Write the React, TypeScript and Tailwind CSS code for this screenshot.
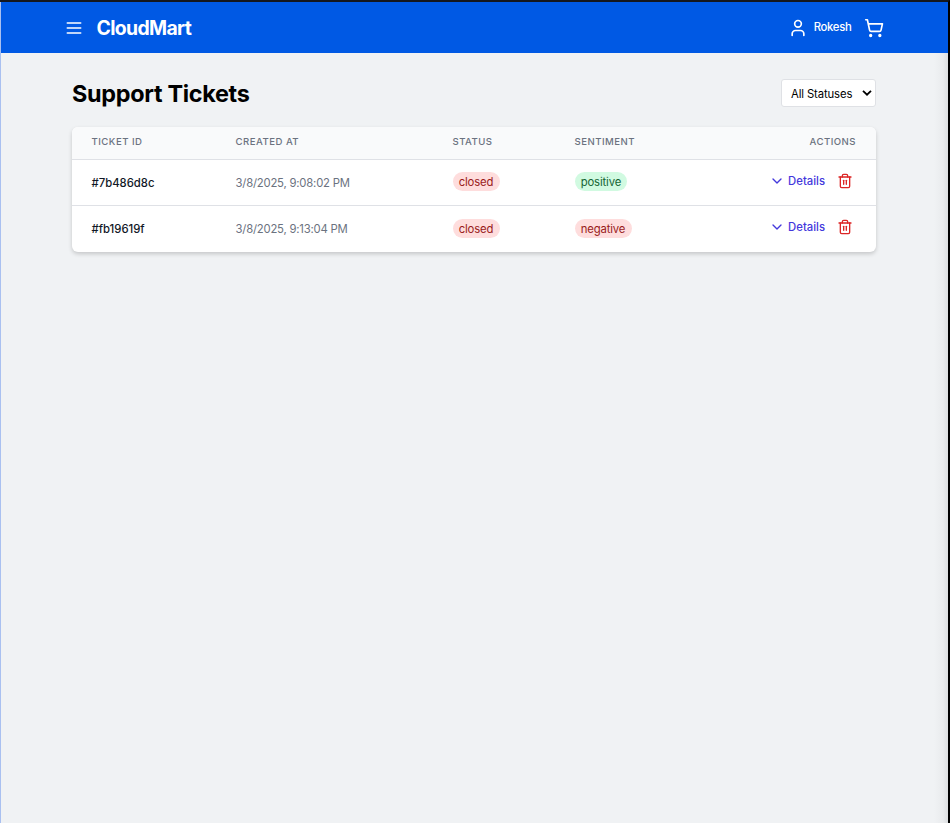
import { ChevronDown, ShoppingCart, Trash2, User } from "lucide-react";

type Ticket = {
  id: string;
  createdAt: string;
  status: string;
  sentiment: "positive" | "negative";
};

const tickets: Ticket[] = [
  { id: "#7b486d8c", createdAt: "3/8/2025, 9:08:02 PM", status: "closed", sentiment: "positive" },
  { id: "#fb19619f", createdAt: "3/8/2025, 9:13:04 PM", status: "closed", sentiment: "negative" },
];

const columns = "grid grid-cols-[144px_217px_122px_1fr_auto] pr-5 pl-[19.5px]";

function Badge({ label, tone }: { label: string; tone: "red" | "green" }) {
  const colors = tone === "red" ? "bg-[#fedddd] text-[#991b1b]" : "bg-[#d1fae1] text-[#166534]";
  return (
    <span className={`inline-flex h-[19px] items-center rounded-full px-[6.2px] pt-px text-[11.3px] tracking-[-0.13px] ${colors}`}>
      {label}
    </span>
  );
}

function MenuIcon() {
  return (
    <svg width="20" height="20" viewBox="0 0 24 24" fill="none" stroke="currentColor" strokeWidth="2" strokeLinecap="round">
      <path d="M4 6h16M4 12h16M4 18h16" />
    </svg>
  );
}

function Header() {
  return (
    <header className="flex h-[51px] items-center justify-between bg-[#0059e4] pr-[64.5px] pl-[62.5px] text-white">
      <div className="flex items-center">
        <button aria-label="Open menu">
          <MenuIcon />
        </button>
        <span className="ml-[13px] pt-px text-[19.4px] leading-6 font-bold tracking-[-0.65px]">CloudMart</span>
      </div>
      <div className="flex items-center">
        <User size={20} />
        <span className="ml-1.5 text-[11.3px] font-medium tracking-[-0.3px]">Rokesh</span>
        <ShoppingCart size={20} className="ml-3" />
      </div>
    </header>
  );
}

function TicketRow({ ticket }: { ticket: Ticket }) {
  return (
    <div className="group border-t border-[#dfe1e6] last:pb-px">
      <div className={`${columns} h-[45px] items-center text-[11.3px]`}>
        <span className="pt-[2px] font-medium text-[#111827]">{ticket.id}</span>
        <span className="pt-[2px] tracking-[-0.2px] text-[#6b7280]">{ticket.createdAt}</span>
        <span className="flex pb-[2px] group-last:pb-0">
          <Badge label={ticket.status} tone="red" />
        </span>
        <span className="flex pb-[2px] group-last:pb-0">
          <Badge label={ticket.sentiment} tone={ticket.sentiment === "positive" ? "green" : "red"} />
        </span>
        <div className="flex items-center pr-[3px] pb-[3px] font-medium">
          <button className="flex items-center text-[#4338dc]">
            <ChevronDown size={16} className="mr-[3px]" />
            <span className="pt-px">Details</span>
          </button>
          <button aria-label="Delete ticket" className="ml-3 text-[#dc2626]">
            <Trash2 size={16} />
          </button>
        </div>
      </div>
    </div>
  );
}

export default function App() {
  return (
    <div className="flex h-[823px] w-[950px] flex-col overflow-hidden border-t-2 border-r-2 border-t-[#14171d] border-r-black bg-[#f0f2f4] font-['Inter',sans-serif]">
      <div className="flex min-h-0 flex-1 border-l border-[#a9c0f0] bg-[linear-gradient(to_left,#dcdee0,#e9ebed_5px,#f0f2f4_14px)]">
        <div className="min-w-0 flex-1">
          <Header />
          <main className="pr-[72px] pl-[71px]">
            <div className="flex h-[54px] items-end justify-between">
              <h1 className="text-[23.4px] leading-[26px] font-bold tracking-[-0.3px] text-black">Support Tickets</h1>
              <button className="flex h-[28px] w-[95px] items-center justify-between rounded-[3px] border border-[#dfe1e5] bg-white pr-[3px] pl-[9px] text-[11.3px] tracking-[-0.12px] text-black">
                <span className="pt-[3px]">All Statuses</span>
                <svg width="10" height="6" viewBox="0 0 10 6" fill="none" stroke="currentColor" strokeWidth="1.8">
                  <path d="M1 .8 5 4.7 9 .8" />
                </svg>
              </button>
            </div>
            <section className="mt-5 overflow-hidden rounded-md bg-white shadow-[0_2px_4px_rgba(0,0,0,0.18)]">
              <div className={`${columns} h-8 items-center bg-[#f9fafb] pb-[2px] text-[9.6px] font-medium tracking-[0.05em] text-[#6b7280]`}>
                <span>TICKET ID</span>
                <span>CREATED AT</span>
                <span>STATUS</span>
                <span>SENTIMENT</span>
                <span>ACTIONS</span>
              </div>
              {tickets.map((ticket) => (
                <TicketRow key={ticket.id} ticket={ticket} />
              ))}
            </section>
          </main>
        </div>
      </div>
    </div>
  );
}
